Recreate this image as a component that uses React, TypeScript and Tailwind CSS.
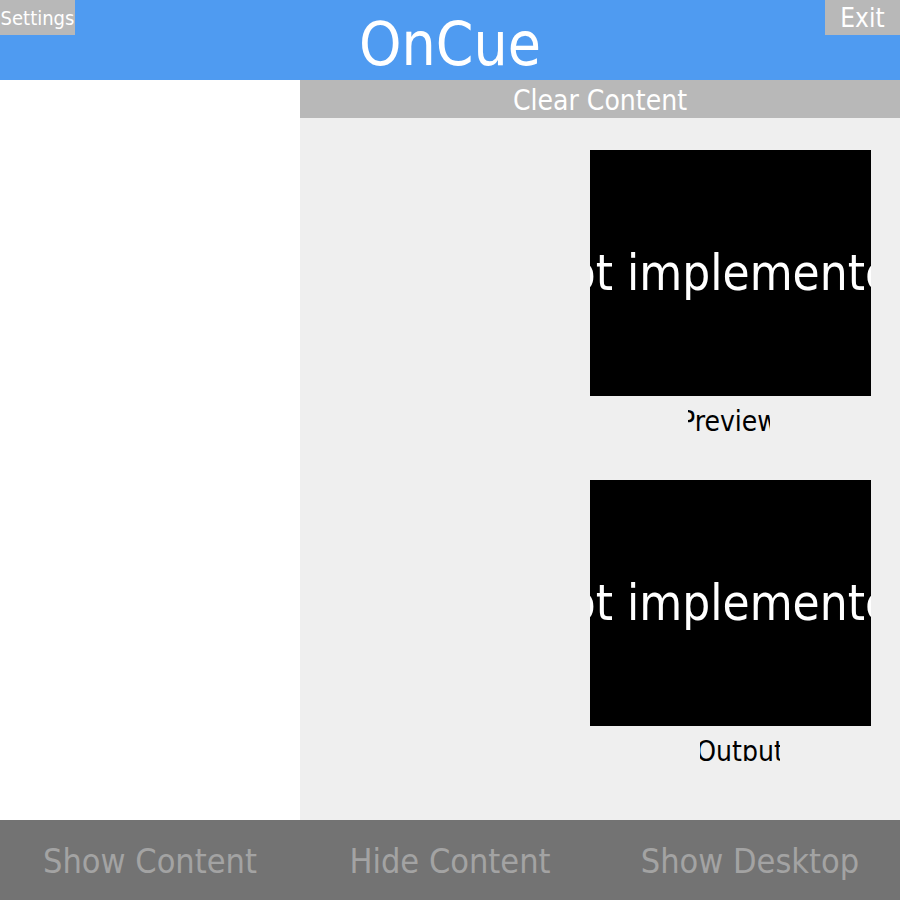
const font = { fontFamily: '"DejaVu Sans Condensed", "DejaVu Sans", sans-serif' };

function Screen({ label, offset, width }: { label: string; offset: string; width: string }) {
  return (
    <div className="flex w-[281px] flex-col">
      <div className="flex h-[246px] items-center justify-center overflow-hidden bg-black">
        <span className="whitespace-nowrap text-[49px] leading-none text-white">not implemented</span>
      </div>
      <div className={`mt-[9px] flex h-[26px] justify-center overflow-hidden ${offset} ${width}`}>
        <span className="whitespace-nowrap text-[28px] leading-[34px] text-black">{label}</span>
      </div>
    </div>
  );
}

export default function App() {
  return (
    <div className="flex h-[900px] w-[900px] flex-col overflow-hidden" style={font}>
      <header className="flex h-[80px] items-start justify-between bg-[#4f9bf1]">
        <button className="flex h-[35px] w-[75px] items-center justify-center bg-[#b8b8b8] text-[20px] leading-none text-white">
          Settings
        </button>
        <h1 className="mt-[14px] text-[60px] leading-none text-white">OnCue</h1>
        <button className="flex h-[35px] w-[75px] items-center justify-center bg-[#b8b8b8] text-[26px] leading-none text-white">
          Exit
        </button>
      </header>

      <div className="flex flex-1">
        <aside className="w-[300px] bg-white" />
        <main className="flex flex-1 flex-col bg-[#efefef]">
          <button className="flex h-[38px] items-center justify-center bg-[#b8b8b8] pt-[3px] text-[28px] leading-none text-white">
            Clear Content
          </button>
          <div className="flex flex-col items-end gap-[49px] pr-[29px] pt-[32px]">
            <Screen label="Preview" offset="ml-[98px]" width="w-[82px]" />
            <Screen label="Output" offset="ml-[110px]" width="w-[80px]" />
          </div>
        </main>
      </div>

      <footer className="grid h-[80px] grid-cols-3 items-center bg-[#737373] pt-[3px] text-[34px] text-[#a3a3a3]">
        <button className="text-center">Show Content</button>
        <button className="text-center">Hide Content</button>
        <button className="text-center">Show Desktop</button>
      </footer>
    </div>
  );
}
